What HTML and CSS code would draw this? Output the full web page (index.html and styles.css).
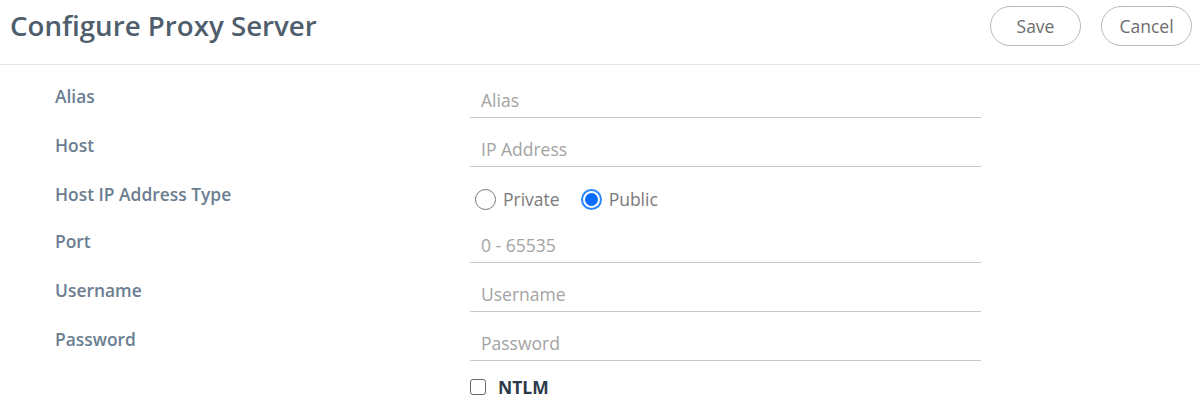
FILE: index.html
```html
<!DOCTYPE html>
<html>
<head>
<meta charset="utf-8">
<link rel="stylesheet" href="styles.css">
</head>
<body>
<header class="topbar">
  <h1 class="title">Configure Proxy Server</h1>
  <div class="actions">
    <button class="btn">Save</button>
    <button class="btn">Cancel</button>
  </div>
</header>
<main class="form">
  <div class="row">
    <label class="label">Alias</label>
    <div class="field"><input class="input" placeholder="Alias"></div>
  </div>
  <div class="row">
    <label class="label">Host</label>
    <div class="field"><input class="input" placeholder="IP Address"></div>
  </div>
  <div class="row row-radio">
    <label class="label">Host IP Address Type</label>
    <div class="field radios">
      <span class="radio-opt"><span class="radio"></span><span class="radio-text">Private</span></span>
      <span class="radio-opt"><span class="radio checked"><span class="dot"></span></span><span class="radio-text">Public</span></span>
    </div>
  </div>
  <div class="row">
    <label class="label">Port</label>
    <div class="field"><input class="input" placeholder="0 - 65535"></div>
  </div>
  <div class="row">
    <label class="label">Username</label>
    <div class="field"><input class="input" placeholder="Username"></div>
  </div>
  <div class="row">
    <label class="label">Password</label>
    <div class="field"><input class="input" placeholder="Password"></div>
  </div>
  <div class="row row-check">
    <span class="label"></span>
    <div class="field check">
      <span class="box"></span><span class="check-text">NTLM</span>
    </div>
  </div>
</main>
</body>
</html>
```
FILE: styles.css
```css
* { box-sizing: border-box; }
body {
  margin: 0;
  font-family: "Open Sans", Lato, sans-serif;
  background: #fff;
}
.topbar {
  display: flex;
  align-items: center;
  justify-content: space-between;
  height: 65px;
  border-bottom: 1px solid #dfe6ee;
  padding: 0 8px 14px 10px;
}
.title {
  margin: 0;
  font-size: 27.7px;
  font-weight: 600;
  color: #4f5e6d;
  line-height: 36px;
}
.actions { display: flex; gap: 20px; margin-top: 2px; }
.btn {
  width: 91px;
  height: 40px;
  border: 1px solid #b9b9b9;
  border-radius: 20px;
  background: #fff;
  font-family: inherit;
  font-size: 17.5px;
  color: #6d6d6d;
}
.form { padding: 17px 0 0 55px; }
.row {
  display: flex;
  height: 49px;
}
.row-radio { height: 47px; }
.label {
  width: 415px;
  padding-top: 2px;
  font-size: 17.4px;
  line-height: 24px;
  font-weight: 600;
  color: #6b7e91;
}
.field { width: 511px; }
.input {
  width: 100%;
  height: 36px;
  border: 0;
  border-bottom: 1px solid #c8c8c8;
  padding: 0 11px;
  font-family: inherit;
  font-size: 17.5px;
  outline: none;
}
.input::placeholder { color: #a3a3a3; }
.radios {
  display: flex;
  align-items: center;
  height: 38px;
  padding-left: 5px;
  padding-top: 0px;
}
.radio-opt { display: flex; align-items: center; margin-right: 21px; }
.radio {
  width: 21px;
  height: 21px;
  border: 1px solid #777;
  border-radius: 50%;
  display: flex;
  align-items: center;
  justify-content: center;
  margin-right: 7px;
}
.radio.checked { border: 2px solid #2a86ff; }
.dot { width: 13px; height: 13px; border-radius: 50%; background: #0a6cff; }
.radio-text { font-size: 17.5px; color: #7a7a7a; }
.check { display: flex; align-items: center; height: 22px; margin-top: 2px; }
.box {
  width: 16px;
  height: 16px;
  border: 1px solid #666;
  border-radius: 3px;
  margin-right: 12px;
}
.check-text { font-size: 17.5px; font-weight: 700; color: #2c3a4b; }
```
